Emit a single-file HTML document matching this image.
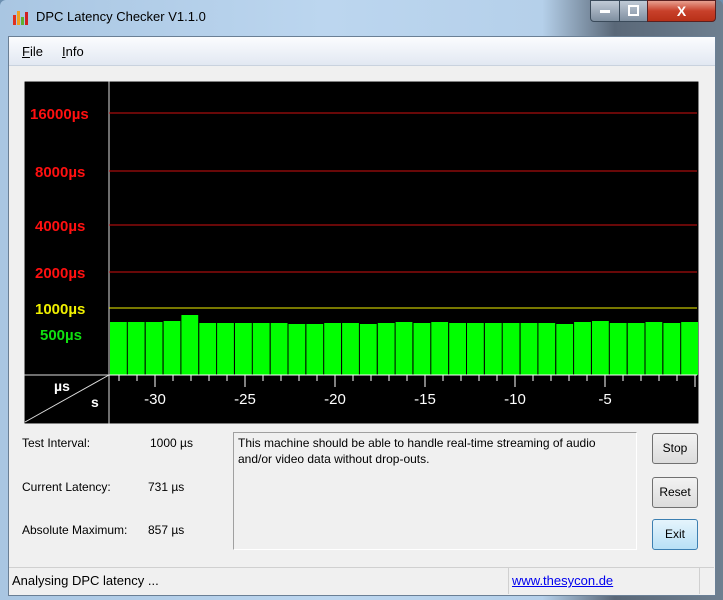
<!DOCTYPE html>
<html><head><style>
body{margin:0;width:723px;height:600px;overflow:hidden;font-family:"Liberation Sans",sans-serif;background:#6c8fb0;position:relative}
.frame{position:absolute;left:0;top:0;width:723px;height:600px;background:linear-gradient(90deg,#a9c6e2 0%,#bcd6ef 45%,#b5d0ea 75%,#5a6878 85%,#6e7f90 100%);border-radius:6px 6px 0 0}
.title{position:absolute;left:36px;top:9px;font-size:13px;color:#000}
.client{position:absolute;left:8px;top:36px;width:706px;height:558px;background:#f0f0f0;border:1px solid #6a7f95}
.menu{position:absolute;left:0;top:0;width:706px;height:28px;background:linear-gradient(#fbfcfe,#e2e8f2);border-bottom:1px solid #c9d2de;font-size:13px}
.menu span{position:absolute;top:7px}
.lbl{position:absolute;font-size:12px;color:#000}
.btn{position:absolute;left:644px;width:44px;height:29px;border:1px solid #707070;border-radius:3px;background:linear-gradient(#f2f2f2,#dcdcdc);font-size:12px;text-align:center;line-height:29px}
</style></head><body>
<div class="frame"></div>
<svg style="position:absolute;left:12px;top:9px" width="18" height="16"><rect x="1" y="6" width="3" height="10" fill="#e03020"/><rect x="5" y="2" width="3" height="14" fill="#f0a020"/><rect x="9" y="8" width="3" height="8" fill="#60b030"/><rect x="13" y="3" width="3" height="13" fill="#d02020"/></svg>
<div class="title">DPC Latency Checker V1.1.0</div>
<div style="position:absolute;left:590px;top:0px;width:28px;height:20px;border:1px solid #3a4a5a;border-radius:0 0 0 4px;background:linear-gradient(#c0cad6,#7f8fa0)"><div style="margin:9px 9px;width:10px;height:3px;background:#fff"></div></div>
<div style="position:absolute;left:619px;top:0px;width:27px;height:20px;border:1px solid #3a4a5a;background:linear-gradient(#c0cad6,#7f8fa0)"><div style="margin:4px 8px;width:7px;height:7px;border:2px solid #fff"></div></div>
<div style="position:absolute;left:647px;top:0px;width:67px;height:20px;border:1px solid #5a2020;border-radius:0 0 4px 0;background:linear-gradient(#e8a090,#c8402a 50%,#b83018);color:#fff;font-weight:bold;text-align:center;font-size:14px;line-height:20px">X</div>
<div class="client">
<div class="menu"><span style="left:13px"><u>F</u>ile</span><span style="left:53px"><u>I</u>nfo</span></div>
</div>
<svg style="position:absolute;left:24px;top:81px" width="675" height="343" font-family="Liberation Sans" font-weight="bold">
<rect x="0" y="0" width="675" height="343" fill="#000" stroke="#fff" stroke-width="1"/>
<line x1="85" y1="0" x2="85" y2="343" stroke="#ddd"/>
<line x1="0" y1="294" x2="85" y2="294" stroke="#ddd"/>
<line x1="1" y1="341" x2="85" y2="294" stroke="#ddd"/>
<text x="30" y="310" fill="#fff" font-size="14">µs</text>
<text x="67" y="326" fill="#fff" font-size="14">s</text>
<g stroke="#d01010"><line x1="85" y1="32" x2="673" y2="32"/><line x1="85" y1="90" x2="673" y2="90"/><line x1="85" y1="144" x2="673" y2="144"/><line x1="85" y1="191" x2="673" y2="191"/></g>
<line x1="85" y1="227" x2="673" y2="227" stroke="#f0f000"/>
<g fill="#ff1010" font-size="15"><text x="6" y="38">16000µs</text><text x="11" y="96">8000µs</text><text x="11" y="150">4000µs</text><text x="11" y="197">2000µs</text></g>
<text x="11" y="233" fill="#f0f000" font-size="15">1000µs</text>
<text x="16" y="259" fill="#10e010" font-size="15">500µs</text>
<g fill="#00ff00" id="bars"></g>
<line x1="85" y1="294" x2="673" y2="294" stroke="#fff"/>
<g id="ticks" stroke="#fff"></g>
<g fill="#fff" font-size="15" font-weight="normal" text-anchor="middle">
<text x="131" y="323">-30</text><text x="221" y="323">-25</text><text x="311" y="323">-20</text><text x="401" y="323">-15</text><text x="491" y="323">-10</text><text x="581" y="323">-5</text></g>
</svg>
<script>
var tops=[241,241,241,240,234,242,242,242,242,242,243,243,242,242,243,242,241,242,241,242,242,242,242,242,242,243,241,240,242,242,241,242,241];
var s='';for(var i=0;i<33;i++){var x=86+i*17.85;s+='<rect x="'+x.toFixed(1)+'" y="'+tops[i]+'" width="16.8" height="'+(294-tops[i])+'"/>';}
document.getElementById('bars').innerHTML=s;
var t='';for(var i=0;i<33;i++){var x=95+i*18;var maj=((x-131)%90===0);t+='<line x1="'+x+'" y1="294" x2="'+x+'" y2="'+(maj?306:300)+'"/>';}
document.getElementById('ticks').innerHTML=t;
</script>
<div class="lbl" style="left:22px;top:436px">Test Interval:</div><div class="lbl" style="left:150px;top:436px">1000 µs</div>
<div class="lbl" style="left:22px;top:480px">Current Latency:</div><div class="lbl" style="left:148px;top:480px">731 µs</div>
<div class="lbl" style="left:22px;top:523px">Absolute Maximum:</div><div class="lbl" style="left:148px;top:523px">857 µs</div>
<div style="position:absolute;left:233px;top:432px;width:404px;height:118px;border:1px solid #a0a0a0;border-right-color:#fff;border-bottom-color:#fff;background:#f0f0f0;font-size:12px;padding:2px 4px;box-sizing:border-box;line-height:16px">This machine should be able to handle real-time streaming of audio and/or video data without drop-outs.</div>
<div class="btn" style="top:433px;left:652px">Stop</div>
<div class="btn" style="top:477px;left:652px">Reset</div>
<div class="btn" style="top:519px;left:652px;border-color:#3c7fb1;background:linear-gradient(#e5f4fc,#b8e0f6)">Exit</div>
<div style="position:absolute;left:9px;top:567px;width:705px;height:26px;border-top:1px solid #d0d0d0;background:#f0f0f0;font-size:13px">
<span style="position:absolute;left:3px;top:5px">Analysing DPC latency ...</span>
<span style="position:absolute;left:499px;top:0;height:26px;border-left:1px solid #d0d0d0"></span>
<span style="position:absolute;left:503px;top:5px;color:#0000ee;text-decoration:underline">www.thesycon.de</span>
<span style="position:absolute;left:690px;top:0;height:26px;border-left:1px solid #d0d0d0"></span>
</div>
</body></html>
